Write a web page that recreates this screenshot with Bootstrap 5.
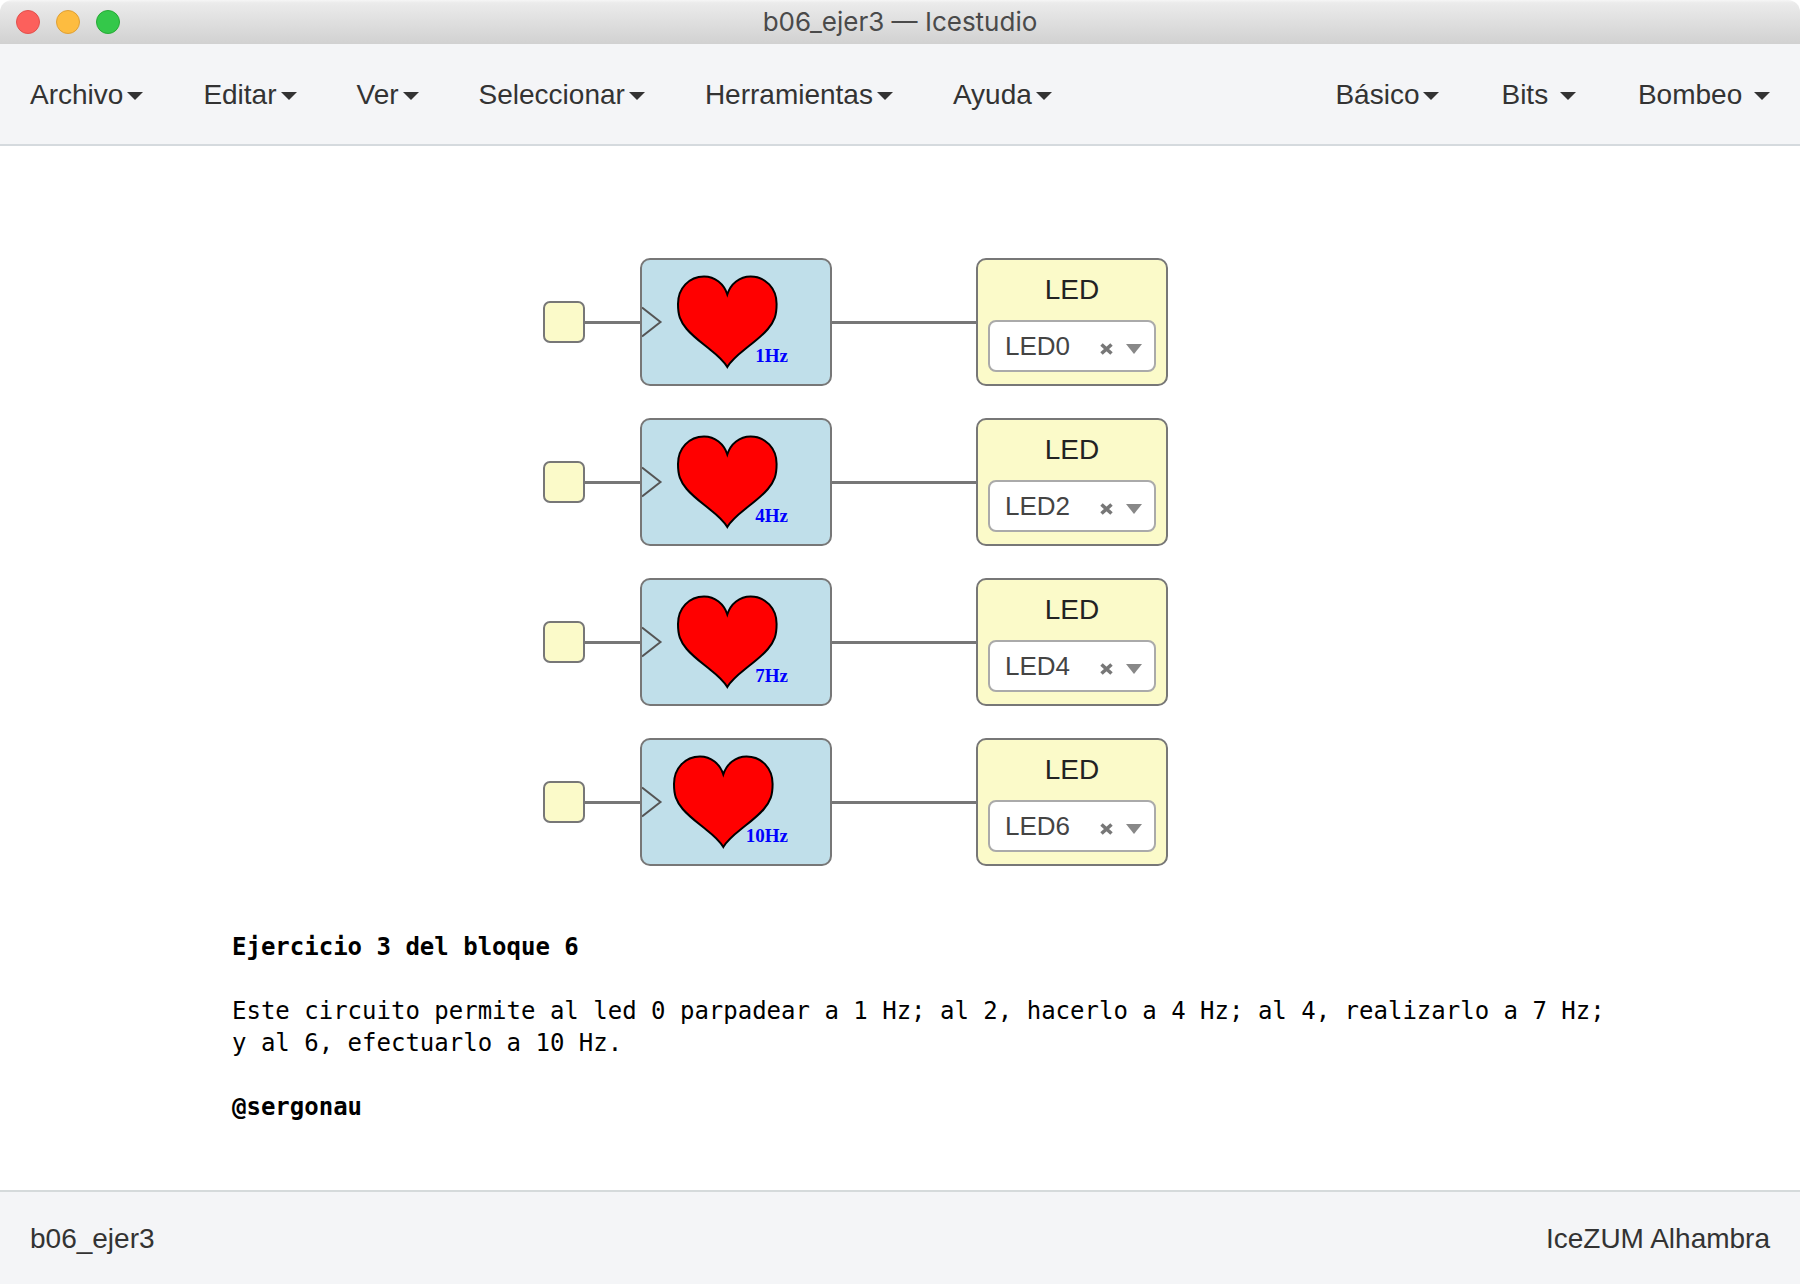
<!DOCTYPE html>
<html lang="es">
<head>
<meta charset="utf-8">
<meta name="viewport" content="width=device-width, initial-scale=1">
<title>b06_ejer3 — Icestudio</title>
<link href="https://cdn.jsdelivr.net/npm/bootstrap@5.3.0/dist/css/bootstrap.min.css" rel="stylesheet">
<script src="https://cdn.jsdelivr.net/npm/bootstrap@5.3.0/dist/js/bootstrap.bundle.min.js" defer></script>
<style>
  body { font-family: "Liberation Sans", Arial, sans-serif; font-size: 28px; line-height: 40px; color: #333; background: #fff; }
  .titlebar { height: 44px; padding: 0 16px; border-radius: 12px 12px 0 0; background: linear-gradient(#f6f6f6 0, #ebebeb 3px, #d1d1d1 100%); }
  .titlebar-name { font: 400 26px/40px Inter, sans-serif; color: #4a4a4a; }
  .light { width: 24px; height: 24px; padding: 0; border: 1px solid; border-radius: 50%; }
  .light-close { background: #fc605c; border-color: #e2504c; }
  .light-min { background: #fdbc40; border-color: #dfa035; }
  .light-max { background: #34c84a; border-color: #27aa35; }
  .menubar { padding: 31px 0 29px; background: #f4f5f7; border-bottom: 2px solid #d5dade; }
  .menubar .nav-link { padding: 0 30px; color: #333; font-size: 28px; line-height: 40px; border: 0; background: none; }
  .menubar .dropdown-toggle::after { margin-left: 4px; vertical-align: 4px; border-top: 8px solid; border-right: 8px solid transparent; border-left: 8px solid transparent; }
  .collections { gap: 2px; }
  .sheet { padding: 112px 0 60px 232px; }
  .circuit { gap: 32px; margin-left: 311px; margin-bottom: 65px; }
  .pin, .block { flex: none; border: 2px solid #777; }
  .pin { width: 42px; height: 42px; border-radius: 7px; background: #fbfac9; }
  .block { width: 192px; height: 128px; border-radius: 10px; }
  .block-code { background: #c0dfea; }
  .block-out { background: #fbfac9; padding: 10px; }
  .wire { flex: none; height: 3px; background: #777; }
  .wire-in { width: 55px; }
  .wire-out { width: 144px; }
  .heart { fill: #f00; stroke: #000; stroke-width: 2; }
  .freq { font: bold 19px "Liberation Serif", serif; fill: #00f; text-anchor: end; }
  .block-out label { color: #222; margin-bottom: 10px; text-align: center; }
  .picker { height: 52px; border: 2px solid #aaa; border-radius: 8px; background: #fff; padding: 0 12px 0 15px; }
  .picker select { appearance: none; min-width: 0; padding: 0; border: 0; background: none; font-size: 26px; line-height: 40px; color: #444; }
  .picker button { padding: 0; border: 0; background: none; line-height: 0; margin-right: 13px; }
  .picker svg { margin-top: 6px; }
  .notes { font-family: "DejaVu Sans Mono", monospace; font-size: 24px; line-height: 32px; color: #000; }
  .notes p { margin-bottom: 32px; }
  .statusbar { padding: 27px 30px 25px; background: #f4f5f7; border-top: 2px solid #d5dadb; }
</style>
</head>
<body class="d-flex flex-column min-vh-100">
<svg class="d-none" aria-hidden="true">
  <symbol id="heart" viewBox="0 0 192 128">
    <path class="heart" d="M87.3 36.5C84 26 75 18.5 64 18.5C49 18.5 38 30.500 38 46C38 57 40 63 46.700 71C53 78.500 62 85 70 91.500C77 97 83 102 87.3 109C91.600 102 97.600 97 104.600 91.500C112.600 85 121.600 78.500 127.900 71C134.600 63 136.600 57 136.600 46C136.600 30.500 125.600 18.500 110.600 18.500C99.600 18.500 90.600 26 87.3 36.500Z"/>
  </symbol>
  <symbol id="clear" viewBox="0 0 13 12"><path d="M1.500 1.500L11.500 10.500M11.500 1.500L1.500 10.500" stroke="#777" stroke-width="3.600"/></symbol>
  <symbol id="arrow" viewBox="0 0 16 10"><path d="M0 0H16L8 10Z" fill="#888"/></symbol>
</svg>

<header>
  <div class="titlebar d-flex align-items-center">
    <div class="col d-flex gap-3">
      <button class="light light-close" type="button" aria-label="Cerrar"></button>
      <button class="light light-min" type="button" aria-label="Minimizar"></button>
      <button class="light light-max" type="button" aria-label="Maximizar"></button>
    </div>
    <div class="titlebar-name">b06_ejer3 — Icestudio</div>
    <div class="col"></div>
  </div>
  <nav class="menubar d-flex justify-content-between">
    <div class="nav">
      <button class="nav-link dropdown-toggle" type="button">Archivo</button>
      <button class="nav-link dropdown-toggle" type="button">Editar</button>
      <button class="nav-link dropdown-toggle" type="button">Ver</button>
      <button class="nav-link dropdown-toggle" type="button">Seleccionar</button>
      <button class="nav-link dropdown-toggle" type="button">Herramientas</button>
      <button class="nav-link dropdown-toggle" type="button">Ayuda</button>
    </div>
    <div class="nav collections">
      <button class="nav-link dropdown-toggle" type="button">Básico</button>
      <button class="nav-link dropdown-toggle" type="button">Bits&nbsp;</button>
      <button class="nav-link dropdown-toggle" type="button">Bombeo&nbsp;</button>
    </div>
  </nav>
</header>

<main class="sheet flex-grow-1">
  <div class="circuit d-flex flex-column">
    <div class="d-flex align-items-center">
      <div class="pin"></div><div class="wire wire-in"></div>
      <div class="block block-code">
        <svg class="d-block" width="188" height="124" viewBox="2 2 188 124"><path d="M2 49.500L20.500 64L2 78.500" fill="none" stroke="#555" stroke-width="2"/><use href="#heart" width="192" height="128"/><text class="freq" x="148" y="104">1Hz</text></svg>
      </div>
      <div class="wire wire-out"></div>
      <div class="block block-out d-flex flex-column">
        <label for="led-a">LED</label>
        <div class="picker d-flex align-items-center">
          <select id="led-a" class="flex-grow-1"><option>LED0</option></select>
          <button type="button" aria-label="Quitar"><svg width="13" height="12"><use href="#clear"/></svg></button>
          <svg width="16" height="10"><use href="#arrow"/></svg>
        </div>
      </div>
    </div>
    <div class="d-flex align-items-center">
      <div class="pin"></div><div class="wire wire-in"></div>
      <div class="block block-code">
        <svg class="d-block" width="188" height="124" viewBox="2 2 188 124"><path d="M2 49.500L20.500 64L2 78.500" fill="none" stroke="#555" stroke-width="2"/><use href="#heart" width="192" height="128"/><text class="freq" x="148" y="104">4Hz</text></svg>
      </div>
      <div class="wire wire-out"></div>
      <div class="block block-out d-flex flex-column">
        <label for="led-b">LED</label>
        <div class="picker d-flex align-items-center">
          <select id="led-b" class="flex-grow-1"><option>LED2</option></select>
          <button type="button" aria-label="Quitar"><svg width="13" height="12"><use href="#clear"/></svg></button>
          <svg width="16" height="10"><use href="#arrow"/></svg>
        </div>
      </div>
    </div>
    <div class="d-flex align-items-center">
      <div class="pin"></div><div class="wire wire-in"></div>
      <div class="block block-code">
        <svg class="d-block" width="188" height="124" viewBox="2 2 188 124"><path d="M2 49.500L20.500 64L2 78.500" fill="none" stroke="#555" stroke-width="2"/><use href="#heart" width="192" height="128"/><text class="freq" x="148" y="104">7Hz</text></svg>
      </div>
      <div class="wire wire-out"></div>
      <div class="block block-out d-flex flex-column">
        <label for="led-c">LED</label>
        <div class="picker d-flex align-items-center">
          <select id="led-c" class="flex-grow-1"><option>LED4</option></select>
          <button type="button" aria-label="Quitar"><svg width="13" height="12"><use href="#clear"/></svg></button>
          <svg width="16" height="10"><use href="#arrow"/></svg>
        </div>
      </div>
    </div>
    <div class="d-flex align-items-center">
      <div class="pin"></div><div class="wire wire-in"></div>
      <div class="block block-code">
        <svg class="d-block" width="188" height="124" viewBox="2 2 188 124"><path d="M2 49.500L20.500 64L2 78.500" fill="none" stroke="#555" stroke-width="2"/><use href="#heart" x="-4" width="192" height="128"/><text class="freq" x="148" y="104">10Hz</text></svg>
      </div>
      <div class="wire wire-out"></div>
      <div class="block block-out d-flex flex-column">
        <label for="led-d">LED</label>
        <div class="picker d-flex align-items-center">
          <select id="led-d" class="flex-grow-1"><option>LED6</option></select>
          <button type="button" aria-label="Quitar"><svg width="13" height="12"><use href="#clear"/></svg></button>
          <svg width="16" height="10"><use href="#arrow"/></svg>
        </div>
      </div>
    </div>
  </div>
  <div class="notes">
    <p class="fw-bold">Ejercicio 3 del bloque 6</p>
    <p>Este circuito permite al led 0 parpadear a 1 Hz; al 2, hacerlo a 4 Hz; al 4, realizarlo a 7 Hz;<br>y al 6, efectuarlo a 10 Hz.</p>
    <p class="fw-bold mb-0">@sergonau</p>
  </div>
</main>

<footer class="statusbar d-flex justify-content-between">
  <span>b06_ejer3</span>
  <span>IceZUM Alhambra</span>
</footer>
</body>
</html>
